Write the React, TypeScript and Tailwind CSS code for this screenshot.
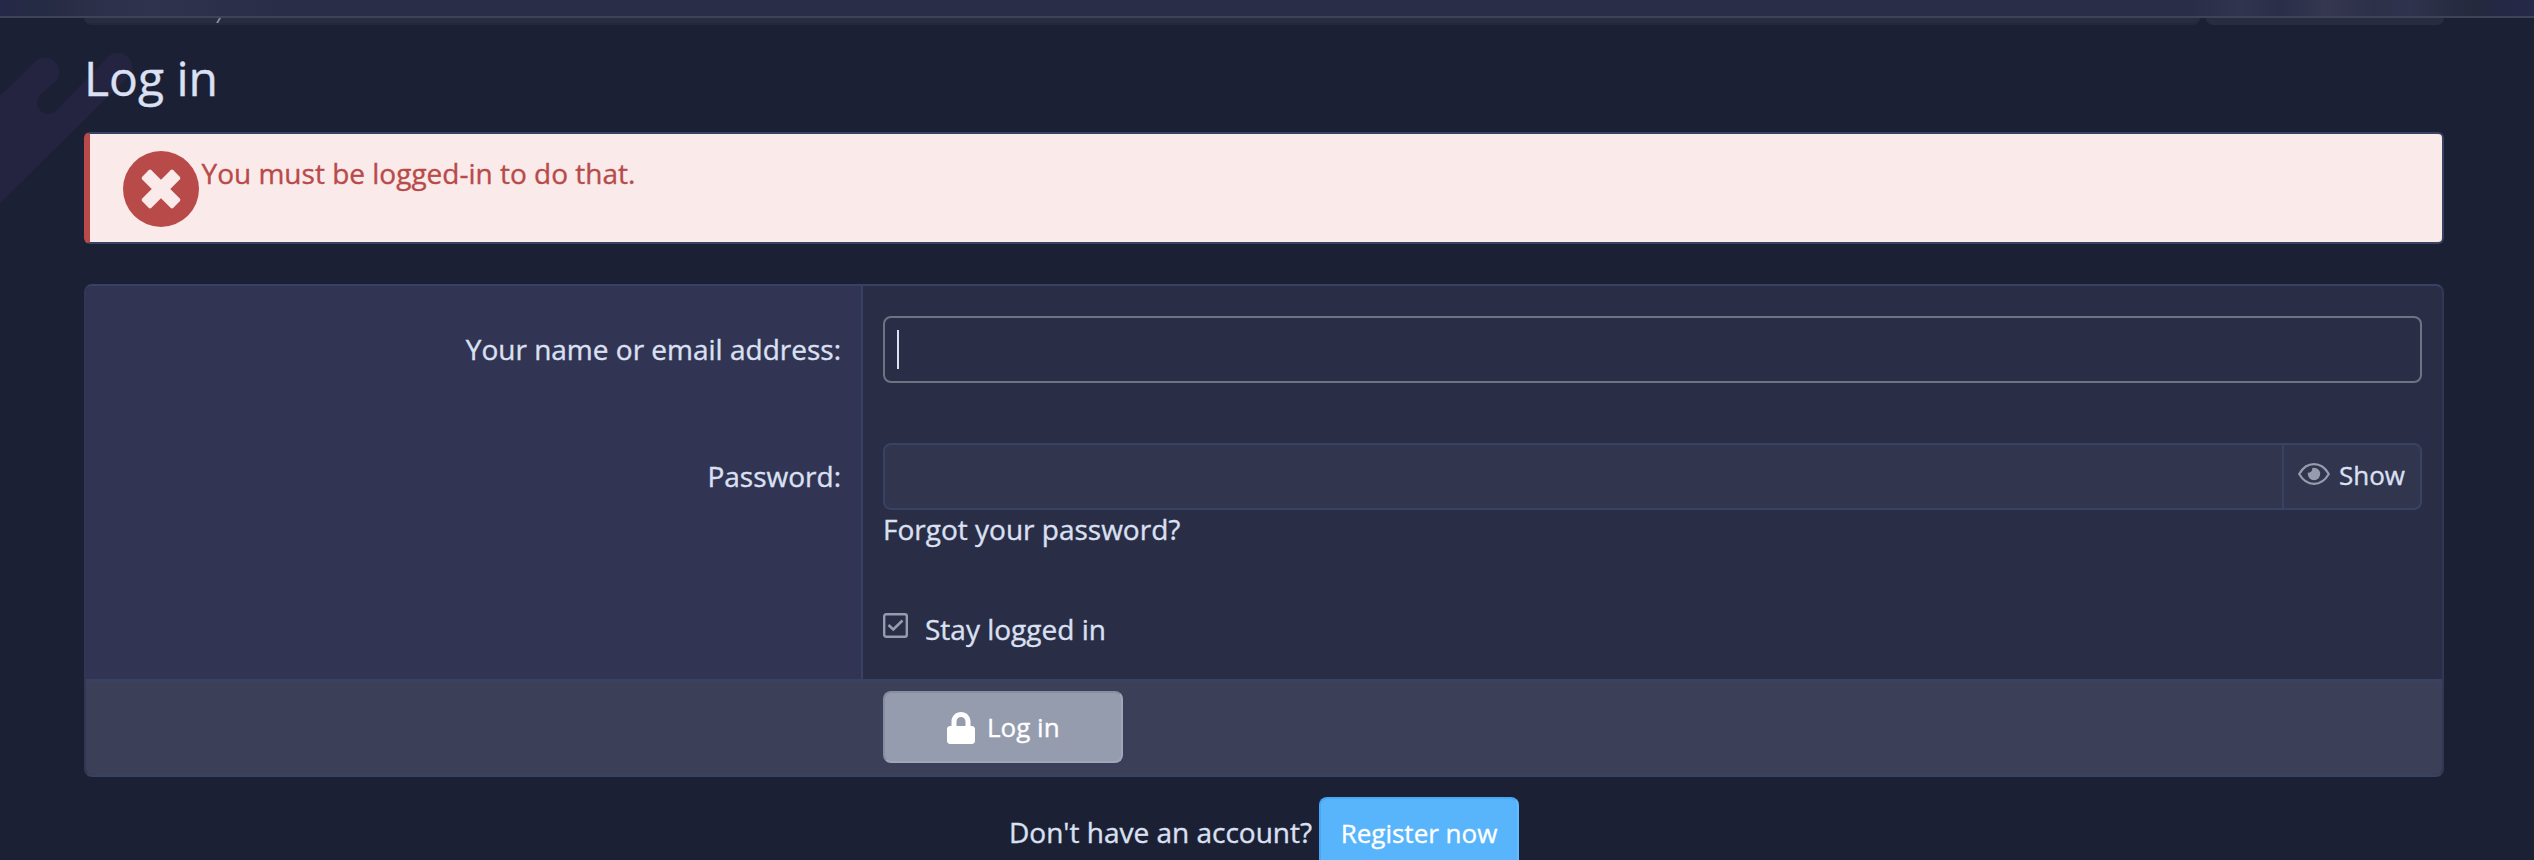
import React from "react";

function BackgroundShape() {
  return (
    <svg className="pointer-events-none absolute left-0 top-0" width="260" height="220" viewBox="0 0 260 220" fill="none">
      <path
        d="M0 96 L35 62 A14 14 0 0 1 55 82 L39 96 A11.500 11.500 0 0 0 55 112 L108 57 A14 14 0 0 1 128 77 L0 203 Z"
        fill="#242440"
      />
    </svg>
  );
}

function ErrorIcon() {
  return (
    <svg className="block h-[76px] w-[76px] shrink-0" viewBox="0 0 76 76">
      <circle cx="38" cy="38" r="38" fill="#b84b4a" />
      <g transform="translate(38 38) rotate(45)" fill="#faeae9">
        <rect x="-22" y="-6.500" width="44" height="13" rx="2" />
        <rect x="-6.500" y="-22" width="13" height="44" rx="2" />
      </g>
    </svg>
  );
}

function EyeIcon() {
  return (
    <svg className="block h-[22px] w-8 shrink-0" viewBox="0 0 32 22" fill="none">
      <path d="M1.200 11 C5 4.500 10 1.200 16 1.200 S27 4.500 30.800 11 C27 17.500 22 20.800 16 20.800 S5 17.500 1.200 11 Z" stroke="#949cae" strokeWidth="2.300" strokeLinejoin="round" />
      <path d="M16 4.800 A6.200 6.200 0 1 1 9.800 11 V9.500 A3.600 3.600 0 0 0 14.200 5.100 Z" fill="#949cae" />
    </svg>
  );
}

function CheckIcon() {
  return (
    <svg className="block h-[25px] w-[25px] shrink-0" viewBox="0 0 25 25" fill="none">
      <rect x="1.200" y="1.200" width="22.600" height="22.600" rx="2" stroke="#949cae" strokeWidth="2.400" />
      <path d="M5.500 12 L10.300 16.500 L19.500 7.500" stroke="#949cae" strokeWidth="2.700" />
    </svg>
  );
}

function LockIcon() {
  return (
    <svg className="mt-px block h-8 w-7 shrink-0" viewBox="0 0 448 512" fill="#fff">
      <path d="M400 224h-24v-72C376 68.200 307.800 0 224 0S72 68.200 72 152v72H48c-26.500 0-48 21.500-48 48v192c0 26.500 21.500 48 48 48h352c26.500 0 48-21.500 48-48V272c0-26.500-21.500-48-48-48zm-104 0H152v-72c0-39.700 32.300-72 72-72s72 32.300 72 72v72z" />
    </svg>
  );
}

export default function App() {
  return (
    <div className="relative h-[860px] w-[2534px] overflow-hidden bg-[#1b2035] font-['Open_Sans',sans-serif] text-[28px] leading-[38px] text-[#dbe0f2] [-webkit-text-stroke:0.35px_currentColor]">
      <BackgroundShape />
      <div className="relative">
        <header className="h-[18px] border-b-2 border-[#3f4357] bg-[linear-gradient(90deg,#252847_0px,#262c43_50px,#2b2f48_85px,#30334d_150px,#2c2f49_230px,#2a2d48_300px,#2a2d48_2190px,#31344e_2240px,#2b2e48_2280px,#34374f_2325px,#2d3049_2375px,#30334d_2410px,#282c42_2450px,#24293e_2480px,#252845_2500px,#252847_2534px)]" />
        <div className="flex h-[7px] gap-1.5 pl-[84px]">
          <div className="h-full w-[2116px] overflow-hidden rounded-b-[7px] border-b-2 border-[#24283d] bg-[#282c42]">
            <svg className="ml-[130px] block h-[7px] w-2" viewBox="0 0 8 7">
              <path d="M1.500 8 L6.500 -1" stroke="#8b8f9c" strokeWidth="1.800" />
            </svg>
          </div>
          <div className="h-full w-[238px] rounded-b-[7px] bg-[#282c42]" />
        </div>

        <main className="ml-[84px] w-[2360px]">
          <h1 className="pt-5 text-[48px] font-normal leading-[66px]">Log in</h1>

          <div className="mt-[21px] flex h-28 rounded-[6px] border-2 border-l-[6px] border-[#384263] border-l-[#b84b4a] bg-[#faeae9] pl-[32.5px] pt-[16.5px] text-[#b84b4a]">
            <ErrorIcon />
            <p className="ml-[3px] pt-[3px]">You must be logged-in to do that.</p>
          </div>

          <form className="mt-10 h-[493px] overflow-hidden rounded-lg border-2 border-[#384263] border-x-[#313855] bg-[#292d46]">
            <div className="flex h-[393px]">
              <div className="w-[777px] border-r-2 border-[#384263] bg-[#313452] pr-5 text-right">
                <label className="block pt-[44px]">Your name or email address:</label>
                <label className="block pt-[89px]">Password:</label>
              </div>
              <div className="flex-1 px-5 pt-[30px]">
                <div className="flex h-[67px] items-center rounded-lg border-2 border-[#6d7383] pl-3">
                  <span className="h-[39px] w-[2px] bg-[#dbe0f2]" />
                </div>
                <div className="mt-[60px] flex h-[67px] rounded-lg border-2 border-[#384263] bg-[#31354e]">
                  <div className="flex-1" />
                  <div className="flex w-[138px] border-l-2 border-[#384263] pl-[14px] pt-[18px] text-[26px]">
                    <EyeIcon />
                    <span className="-mt-[7px] ml-[9px]">Show</span>
                  </div>
                </div>
                <p>Forgot your password?</p>
                <div className="mt-[62px] flex">
                  <div className="pt-[3px]"><CheckIcon /></div>
                  <span className="ml-[17px]">Stay logged in</span>
                </div>
              </div>
            </div>
            <div className="h-[98px] border-t-2 border-[#384263] bg-[#3c3f58] pl-[797px] pt-[10px]">
              <button type="button" className="flex h-[72px] w-60 items-center rounded-lg border-2 border-[#9fa7b8] border-t-[#868ea3] border-l-[#868ea3] bg-[#949cae] pl-[62px] text-[26px] text-white">
                <LockIcon />
                <span className="ml-3">Log in</span>
              </button>
            </div>
          </form>

          <div className="mt-5 flex pl-[925px]">
            <span className="w-[310px] whitespace-nowrap pt-4">Don't have an account?</span>
            <button type="button" className="h-[72px] w-[200px] rounded-lg border-2 border-[#65bbff] border-l-[#47a8f8] border-t-[#47a8f8] bg-[#58b4fb] text-[26px] text-white">Register now</button>
          </div>
        </main>
      </div>
    </div>
  );
}
